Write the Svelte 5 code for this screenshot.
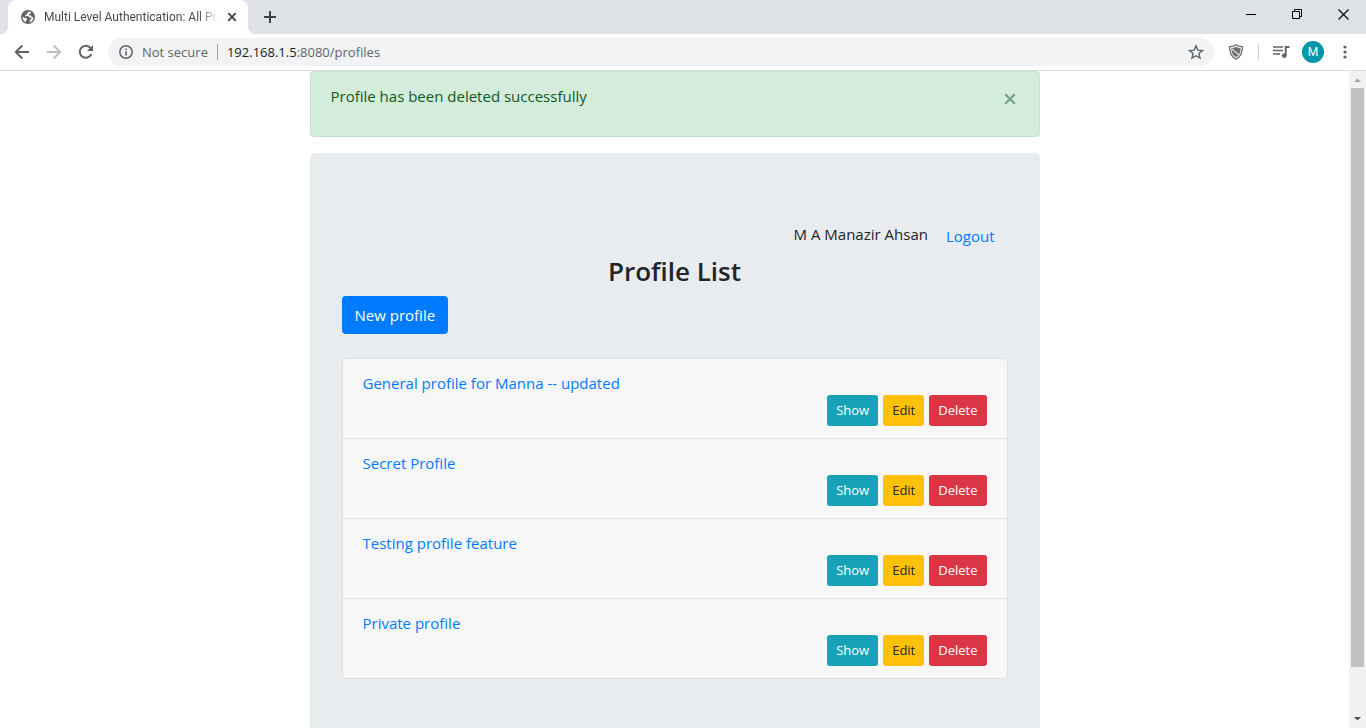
<script>
  const profiles = [
    'General profile for Manna -- updated',
    'Secret Profile',
    'Testing profile feature',
    'Private profile'
  ];
  let alertOpen = $state(true);
</script>

<div class="browser">
  <header class="tabs">
    <div class="tab">
      <svg class="globe" width="14" height="14" viewBox="0 0 14 14" aria-hidden="true">
        <circle cx="7" cy="7" r="7" fill="#5f6368" />
        <path d="M8.200 1.500 6 3.200v1.200L4.300 5v1.200h3.200l1 1.200h1.800v1.500L8.800 10.200v2.100c2-.6 3.500-2.400 3.700-4.600L10.800 6.800 9.300 5.200H7.700l.3-1.200 1.800-.4.100-1.500zM1.500 6.800l1.900 1.100 2 .2.600 1.300-1 1-.1 1.800C2.800 11.400 1.400 9.300 1.500 6.800z" fill="#fff" />
      </svg>
      <span class="title">Multi Level Authentication: All Pro</span>
      <button class="icon" aria-label="Close tab">
        <svg width="10" height="10" viewBox="0 0 10 10"><path d="M1.200 1.200 8.800 8.800M8.800 1.200 1.200 8.800" stroke="#3c4043" stroke-width="1.700" /></svg>
      </button>
    </div>
    <button class="icon plus" aria-label="New tab">
      <svg width="12" height="12" viewBox="0 0 12 12"><path d="M6 0v12M0 6h12" stroke="#3c4043" stroke-width="2" /></svg>
    </button>
    <div class="window">
      <button class="icon" aria-label="Minimize"><svg width="10" height="11" viewBox="0 0 10 11"><path d="M0 5.500h10" stroke="#000" /></svg></button>
      <button class="icon" aria-label="Restore"><svg width="10" height="11" viewBox="0 0 10 11" fill="none" stroke="#000"><path d="M.5 2.500h7v7h-7zM2.500 2.500v-2h7v7h-2" /></svg></button>
      <button class="icon" aria-label="Close window"><svg width="11" height="11" viewBox="0 0 11 11"><path d="M.5.5l10 10M10.500.5l-10 10" stroke="#000" stroke-width="1.100" /></svg></button>
    </div>
  </header>

  <div class="toolbar">
    <button class="icon nav" aria-label="Back"><svg width="16" height="16" viewBox="0 0 16 16" fill="none" stroke="#5f6368" stroke-width="2"><path d="M15 8H2M8.300 1.500 1.800 8l6.500 6.500" /></svg></button>
    <button class="icon nav" aria-label="Forward"><svg width="16" height="16" viewBox="0 0 16 16" fill="none" stroke="#bdc1c6" stroke-width="2"><path d="M1 8h13M7.700 1.500 14.200 8l-6.500 6.500" /></svg></button>
    <button class="icon nav" aria-label="Reload"><svg width="16" height="16" viewBox="0 0 16 16"><path d="M13.300 10.200A6 6 0 1 1 12.300 3.800L13.500 5" fill="none" stroke="#5f6368" stroke-width="2" /><path d="M15 1v6H9z" fill="#5f6368" /></svg></button>
    <div class="omnibox">
      <svg width="14" height="14" viewBox="0 0 14 14" aria-hidden="true"><circle cx="7" cy="7" r="6.200" fill="none" stroke="#5f6368" stroke-width="1.500" /><path d="M6.200 6.200h1.600v4.300H6.200zM6.200 3.500h1.600v1.600H6.200z" fill="#5f6368" /></svg>
      <span class="secure">Not secure</span>
      <span class="bar"></span>
      <span class="url"><b>192.168.1.5</b>:8080/profiles</span>
      <button class="icon star" aria-label="Bookmark this page"><svg width="16" height="16" viewBox="0 0 16 16"><path d="m8 1.800 1.800 4.300 4.700.4-3.600 3 1.100 4.600L8 11.700l-4 2.400 1.100-4.600-3.600-3 4.700-.4z" fill="none" stroke="#5f6368" stroke-width="1.400" /></svg></button>
    </div>
    <button class="icon nav" aria-label="Shield extension">
      <svg width="16" height="16" viewBox="0 0 16 16"><path d="M8 .8c2 1.300 4.300 1.700 6.500 1.900 0 6-1.500 10-6.500 12.500C3 12.700 1.500 8.700 1.500 2.700 3.700 2.500 6 2.100 8 .8z" fill="#ddd" stroke="#6d6d6d" stroke-width="1.200" /><path d="M8 3c1.400.8 3 1.200 4.500 1.400C12.300 8.600 11.200 11.200 8 13 4.800 11.200 3.700 8.600 3.500 4.400 5 4.200 6.600 3.800 8 3z" fill="#6d6d6d" /><path d="m4.200 5.200 7.200 6" stroke="#ddd" stroke-width="1.300" /></svg>
    </button>
    <span class="split"></span>
    <button class="icon nav" aria-label="Media controls"><svg width="17" height="14" viewBox="0 0 17 14"><path d="M0 2h10M0 5.500h10M0 9h7" stroke="#5f6368" stroke-width="1.700" /><path d="M12.700 10V2h3.800" fill="none" stroke="#5f6368" stroke-width="1.900" /><circle cx="11.300" cy="10.600" r="2.400" fill="#5f6368" /></svg></button>
    <button class="avatar" aria-label="Account">M</button>
    <button class="icon nav menu" aria-label="Menu"><svg width="4" height="14" viewBox="0 0 4 14" fill="#5f6368"><circle cx="2" cy="2" r="1.600" /><circle cx="2" cy="7" r="1.600" /><circle cx="2" cy="12" r="1.600" /></svg></button>
  </div>

  <div class="view">
    <main>
      <div class="container">
        {#if alertOpen}
          <div class="alert" role="alert">
            <p>Profile has been deleted successfully</p>
            <button class="dismiss" aria-label="Close" onclick={() => (alertOpen = false)}>
              <svg width="12" height="12" viewBox="0 0 12 12"><path d="m1.200 1.200 9.600 9.600M10.800 1.200l-9.600 9.600" stroke="#74a582" stroke-width="2.300" /></svg>
            </button>
          </div>
        {/if}
        <section class="panel">
          <div class="user">
            <span>M A Manazir Ahsan</span>
            <a href="#logout">Logout</a>
          </div>
          <h1>Profile List</h1>
          <button class="btn primary">New profile</button>
          <ul>
            {#each profiles as name}
              <li>
                <a href="#profile">{name}</a>
                <div class="actions">
                  <button class="btn small info">Show</button>
                  <button class="btn small warning">Edit</button>
                  <button class="btn small danger">Delete</button>
                </div>
              </li>
            {/each}
          </ul>
        </section>
      </div>
    </main>
    <div class="scroll" aria-hidden="true">
      <svg width="17" height="17" viewBox="0 0 17 17"><path d="M5 11h7L8.500 7.500z" fill="#a3a3a3" /></svg>
      <div class="track"><div class="thumb"></div></div>
      <svg width="17" height="17" viewBox="0 0 17 17"><path d="M5 6h7L8.500 9.500z" fill="#505050" /></svg>
    </div>
  </div>
</div>

<style>
  :global(body) { margin: 0; }
  .browser {
    display: flex;
    flex-direction: column;
    height: 100vh;
    overflow: hidden;
    background: #fff;
    color: #212529;
    font: 15px/24px "Segoe UI", "Open Sans", sans-serif;
  }
  .browser * { box-sizing: border-box; }
  button { font: inherit; color: inherit; border: 0; padding: 0; cursor: pointer; }
  a { color: #007bff; text-decoration: none; }
  svg { display: block; flex: none; }
  .icon { display: flex; align-items: center; justify-content: center; background: none; }

  .tabs { display: flex; flex: none; height: 34px; padding-left: 8px; background: #dee1e6; }
  .tab {
    position: relative;
    display: flex;
    align-items: center;
    width: 240px;
    padding: 0 11px 0 13px;
    border-radius: 8px 8px 0 0;
    background: #fff;
    font: 12px/24px Roboto, sans-serif;
    color: #45494d;
  }
  .tab::before, .tab::after {
    content: "";
    position: absolute;
    bottom: 0;
    width: 8px;
    height: 8px;
  }
  .tab::before { right: 100%; background: radial-gradient(circle at 0 0, #dee1e6 8px, #fff 8px); }
  .tab::after { left: 100%; background: radial-gradient(circle at 100% 0, #dee1e6 8px, #fff 8px); }
  .title {
    flex: 1;
    min-width: 0;
    margin: 0 8px 0 9px;
    white-space: nowrap;
    mask-image: linear-gradient(90deg, #000 88%, transparent);
  }
  .plus { width: 28px; margin-left: 8px; }
  .window { display: flex; margin-left: auto; height: 28px; }
  .window .icon { width: 46px; }

  .toolbar {
    display: flex;
    flex: none;
    align-items: center;
    height: 37px;
    padding: 0 5px 0 6px;
    border-bottom: 1px solid #d9dbdd;
  }
  .nav { width: 32px; height: 32px; }
  .omnibox {
    display: flex;
    flex: 1;
    align-items: center;
    height: 28px;
    margin: 0 6px;
    padding: 0 10px 0 11px;
    border-radius: 14px;
    background: #f1f3f4;
    font-size: 13px;
    color: #5f6368;
  }
  .secure { margin-left: 9px; }
  .bar { width: 1px; height: 16px; margin: 0 9px; background: #9aa0a6; }
  .url b { font-weight: 400; color: #202124; }
  .star { margin-left: auto; }
  .split { width: 1px; height: 16px; margin: 0 6px; background: #cfd1d4; }
  .avatar {
    width: 22px;
    height: 22px;
    margin: 0 5px;
    border-radius: 50%;
    background: #0097a7;
    color: #fff;
    font: 12px/22px Roboto, sans-serif;
    text-align: center;
  }

  .view { display: flex; flex: 1; min-height: 0; }
  main { flex: 1; min-width: 0; overflow: hidden; }
  .container { max-width: 730px; margin: 0 auto; }
  .alert {
    display: flex;
    justify-content: space-between;
    align-items: flex-start;
    margin-bottom: 16px;
    padding: 12px 20px;
    border: 1px solid #c3e6cb;
    border-radius: 4px;
    background: #d4edda;
    color: #155724;
  }
  .alert p { margin: 0 0 16px; }
  .dismiss { margin: 9px 3px 0 0; background: none; }
  .panel { padding: 64px 32px; border-radius: 5px; background: #e9ecef; }
  .user { display: flex; justify-content: flex-end; gap: 18px; padding-right: 13px; height: 38px; }
  .user span { line-height: 34px; }
  .user a { line-height: 38px; }
  h1 { margin: 0 0 8px; font-size: 26px; line-height: 33px; font-weight: 600; text-align: center; }
  .btn { padding: 7px 13px; border-radius: 4px; }
  .primary { background: #007bff; color: #fff; }
  ul {
    margin: 24px 0 0;
    padding: 0;
    list-style: none;
    border: 1px solid #dfdfdf;
    border-radius: 4px;
    background: #f7f7f7;
  }
  li { padding: 12px 20px; }
  li + li { border-top: 1px solid #dfdfdf; }
  li > a { display: block; }
  .actions { display: flex; justify-content: flex-end; gap: 5px; }
  .small { padding: 5px 9px; border-radius: 3px; font-size: 13px; line-height: 21px; }
  .info { background: #17a2b8; color: #fff; }
  .warning { background: #ffc107; color: #212529; }
  .danger { background: #dc3545; color: #fff; }

  .scroll { display: flex; flex: none; flex-direction: column; width: 17px; background: #f1f1f1; }
  .track { flex: 1; padding: 0 2px; }
  .thumb { height: 93%; background: #c1c1c1; }
</style>
